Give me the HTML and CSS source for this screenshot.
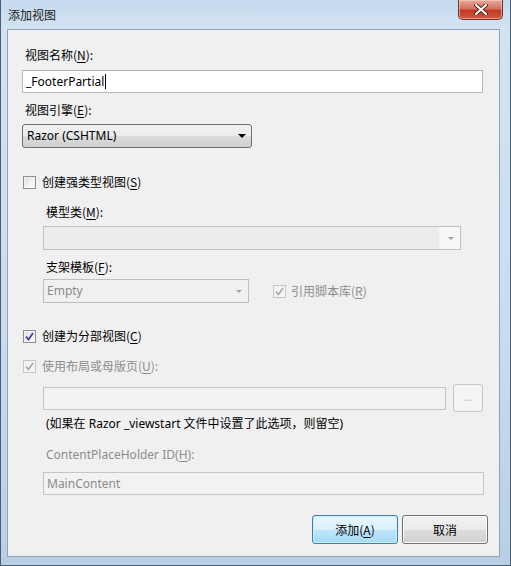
FILE: index.html
```html
<!DOCTYPE html>
<html>
<head>
<meta charset="utf-8">
<link rel="stylesheet" href="styles.css">
</head>
<body>
<div class="window">
  <div class="titlebar">
    <span class="title">添加视图</span>
    <div class="close">
      <svg width="14" height="11" viewBox="0 0 14 11"><path d="M2 1 L12 10 M12 1 L2 10" stroke="#5a1e14" stroke-width="4" stroke-linecap="round"/><path d="M2 1 L12 10 M12 1 L2 10" stroke="#ffffff" stroke-width="2.2" stroke-linecap="round"/></svg>
    </div>
  </div>
  <div class="client">
    <div class="label">视图名称(<u>N</u>):</div>
    <div class="textbox name"><span>_FooterPartial</span><span class="caret"></span></div>
    <div class="label mt9">视图引擎(<u>E</u>):</div>
    <div class="select engine"><span>Razor (CSHTML)</span><span class="arrow"></span></div>

    <div class="check-row mt26"><span class="cb"></span><span>创建强类型视图(<u>S</u>)</span></div>
    <div class="label indent mt14">模型类(<u>M</u>):</div>
    <div class="combo dis model"><span></span><span class="arrow grey"></span></div>
    <div class="label indent mt9">支架模板(<u>F</u>):</div>
    <div class="row mt4">
      <div class="combo dis scaffold"><span>Empty</span><span class="arrow grey"></span></div>
      <div class="check-row dis lib"><span class="cb checked dis"><svg width="11" height="11" viewBox="0 0 11 11"><path d="M2 5.5 L4.5 8.5 L9 2" fill="none" stroke="#a8a8a8" stroke-width="1.6"/></svg></span><span>引用脚本库(<u>R</u>)</span></div>
    </div>

    <div class="check-row mt25"><span class="cb checked"><svg width="11" height="11" viewBox="0 0 11 11"><path d="M2 5.5 L4.5 8.5 L9 2" fill="none" stroke="#3f3f9a" stroke-width="1.8"/></svg></span><span>创建为分部视图(<u>C</u>)</span></div>
    <div class="check-row dis mt14"><span class="cb checked dis"><svg width="11" height="11" viewBox="0 0 11 11"><path d="M2 5.5 L4.5 8.5 L9 2" fill="none" stroke="#a8a8a8" stroke-width="1.6"/></svg></span><span>使用布局或母版页(<u>U</u>):</span></div>
    <div class="row layout-row mt10">
      <div class="textbox dis layout"></div>
      <div class="browse">...</div>
    </div>
    <div class="note mt4">(如果在 Razor _viewstart 文件中设置了此选项，则留空)</div>
    <div class="label indent dis-text mt15">ContentPlaceHolder ID(<u>H</u>):</div>
    <div class="textbox dis cph"><span>MainContent</span></div>

    <div class="buttons">
      <div class="btn default">添加(<u>A</u>)</div>
      <div class="btn">取消</div>
    </div>
  </div>
</div>
</body>
</html>
```

FILE: styles.css
```css
* { box-sizing: border-box; }
html, body { margin: 0; padding: 0; background: #ffffff; }
body {
  font-family: "Noto Sans", "Noto Sans CJK SC", sans-serif;
  font-size: 12px;
  line-height: 16px;
  color: #000;
}
u { text-decoration: underline; text-underline-offset: 2px; }

.window {
  width: 511px;
  height: 566px;
  padding: 0 10px 8px 6px;
  display: flex;
  flex-direction: column;
  background: linear-gradient(to bottom, #c6daee 0px, #d3e3f3 30px, #c9dbee 60%, #b8cfe6 100%);
  border-left: 1px solid #4b5f74;
  border-right: 1px solid #4b5f74;
  border-bottom: 1px solid #4b5f74;
}

.titlebar {
  height: 29px;
  display: flex;
  align-items: flex-start;
  flex-shrink: 0;
}
.title {
  margin-top: 7px;
  margin-left: 1px;
  font-family: "Noto Sans CJK SC", sans-serif;
  color: #1b1b1b;
}
.close {
  margin-left: auto;
  margin-right: -3px;
  width: 45px;
  height: 20px;
  border: 1px solid #6e3329;
  border-top: none;
  border-radius: 0 0 5px 5px;
  background: linear-gradient(to bottom, #e8a99c 0%, #d47260 45%, #c23b23 55%, #d2583c 100%);
  display: flex;
  align-items: center;
  justify-content: center;
  box-shadow: inset 0 0 0 1px rgba(255,220,210,0.5);
}

.client {
  flex: 1;
  background: #f0f0f0;
  border: 1px solid #8ea3ba;
  padding: 17px 11px 0 14px;
  display: flex;
  flex-direction: column;
  align-items: flex-start;
}

.label { height: 16px; padding-left: 3px; font-family: "Noto Sans CJK SC", "Noto Sans", sans-serif; }
.label.indent { padding-left: 24px; }
.dis-text { color: #8d8d8d; font-family: "Noto Sans", "Noto Sans CJK SC", sans-serif; }

.mt4 { margin-top: 4px; }
.mt9 { margin-top: 9px; }
.mt10 { margin-top: 10px; }
.mt14 { margin-top: 14px; }
.mt15 { margin-top: 15px; }
.mt25 { margin-top: 25px; }
.mt26 { margin-top: 26px; }

.textbox {
  display: flex;
  align-items: center;
  background: #fff;
  border: 1px solid #b7bcc4;
  border-top-color: #abadb3;
  padding-left: 3px;
}
.textbox.name { margin-top: 7px; width: 461px; height: 23px; }
.caret { width: 1px; height: 15px; background: #000; margin-left: 1px; }
.textbox.dis { background: #f2f2f2; border-color: #c2c6cb; color: #8a8a8a; }
.textbox.layout { width: 403px; height: 23px; }
.textbox.cph { margin-top: 9px; margin-left: 21px; width: 441px; height: 23px; }

.select {
  display: flex;
  align-items: center;
  justify-content: space-between;
  border: 1px solid #707070;
  border-radius: 3px;
  background: linear-gradient(to bottom, #f2f2f2 0%, #ebebeb 50%, #dddddd 51%, #cfcfcf 100%);
  padding: 0 4px 0 4px;
}
.select.engine { margin-top: 6px; width: 230px; height: 24px; }
.arrow {
  width: 0; height: 0;
  border-left: 4px solid transparent;
  border-right: 4px solid transparent;
  border-top: 4px solid #000;
  margin-right: 1px;
}
.arrow.grey { border-top-color: #a0a0a0; border-left-width: 3px; border-right-width: 3px; border-top-width: 3px; }

.combo {
  display: flex;
  align-items: center;
  justify-content: space-between;
  background: #f0f0f0;
  border: 1px solid #bcc0c5;
  padding: 0 5px 0 3px;
  color: #8a8a8a;
}
.combo.model { margin-top: 6px; margin-left: 21px; width: 418px; height: 24px; background: linear-gradient(to right, #ececec 0, #ececec 95%, #f7f7f7 95%); }
.combo.scaffold { width: 206px; height: 24px; }

.row { display: flex; align-items: center; }
.row.mt4 { margin-left: 21px; }
.layout-row { margin-left: 21px; height: 28px; }

.check-row { display: flex; align-items: center; height: 16px; font-family: "Noto Sans CJK SC", "Noto Sans", sans-serif; }
.check-row .cb { margin-left: 1px; margin-right: 6px; }
.check-row.dis { color: #8d8d8d; }
.check-row.lib { margin-left: 24px; }
.check-row.lib .cb { margin-left: 0; margin-right: 5px; }

.cb {
  width: 13px; height: 13px;
  border: 1px solid #8e8f8f;
  background: linear-gradient(135deg, #dcdcdc 0%, #f4f4f4 60%, #ffffff 100%);
  box-shadow: inset 0 0 0 1px #f4f4f4;
  display: flex;
  align-items: center;
  justify-content: center;
  flex-shrink: 0;
}
.cb.dis { border-color: #c6c6c6; background: #f4f4f4; }

.browse {
  margin-left: 7px;
  width: 30px;
  height: 28px;
  border: 1px solid #c4c7cb;
  border-radius: 3px;
  background: #f4f4f4;
  color: #b0b0b0;
  font-size: 10px;
  display: flex;
  align-items: center;
  justify-content: center;
  padding-bottom: 3px;
}

.note { height: 16px; padding-left: 24px; font-family: "Noto Sans", "Noto Sans CJK SC", sans-serif; }

.buttons {
  margin-top: 20px;
  align-self: stretch;
  display: flex;
  justify-content: flex-end;
  gap: 4px;
  padding-right: 0;
}
.btn {
  width: 86px;
  height: 29px;
  border: 1px solid #707070;
  border-radius: 3px;
  background: linear-gradient(to bottom, #f2f2f2 0%, #ebebeb 50%, #dddddd 51%, #cfcfcf 100%);
  display: flex;
  align-items: center;
  justify-content: center;
  font-family: "Noto Sans CJK SC", "Noto Sans", sans-serif;
  box-shadow: inset 0 0 0 1px #fbfbfb;
}
.btn.default {
  border-color: #3c7fb1;
  background: linear-gradient(to bottom, #eaf6fd 0%, #d9f0fc 50%, #bee6fd 51%, #a7d9f5 100%);
  box-shadow: inset 0 0 0 1px #d2ecfa;
}
```
